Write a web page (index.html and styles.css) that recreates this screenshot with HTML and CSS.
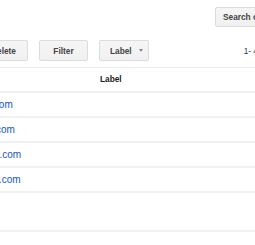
FILE: index.html
```html
<!DOCTYPE html>
<html lang="en">
<head>
  <meta charset="UTF-8" />
  <title>Filters</title>
  <link rel="stylesheet" href="styles.css">
</head>
<body>
  <div class="page">
    <div class="top-bar">
      <div class="button search-button">Search options</div>
    </div>

    <div class="toolbar">
      <div class="button">Delete</div>
      <div class="button">Filter</div>
      <div class="button label-button">Label <span class="arrow"></span></div>
      <div class="count">1- 4 of 4</div>
    </div>

    <table class="filters">
      <thead>
        <tr>
          <th class="col-match"></th>
          <th class="col-label">Label</th>
        </tr>
      </thead>
      <tbody>
        <tr><td><a href="#">info@example.com</a></td><td></td></tr>
        <tr><td><a href="#">mail@example.com</a></td><td></td></tr>
        <tr><td><a href="#">design@domain.com</a></td><td></td></tr>
        <tr><td><a href="#">info@webshop2.com</a></td><td></td></tr>
        <tr class="empty-row"><td></td><td></td></tr>
      </tbody>
    </table>
  </div>
</body>
</html>
```

FILE: styles.css
```css
* {
  margin: 0;
  padding: 0;
  box-sizing: border-box;
}

html, body {
  width: 100%;
  height: 100%;
  background-color: white;
  overflow: hidden;
  font-family: 'Liberation Sans', Arial, sans-serif;
  color: #222;
}

.page {
  width: 500px;
  margin-left: -100px;
}

.top-bar {
  display: flex;
  padding-top: 7px;
  padding-left: 315px;
}

.button {
  min-width: 49px;
  height: 21px;
  padding: 0 10px;
  display: flex;
  justify-content: center;
  align-items: center;
  background: linear-gradient(#f5f5f5, #f1f1f1);
  border: 1px solid #dcdcdc;
  border-radius: 2px;
  color: #444;
  font-size: 8.3px;
  font-weight: bold;
  white-space: nowrap;
}

.search-button {
  height: 20px;
  padding: 0 7px;
}

.toolbar {
  display: flex;
  align-items: center;
  gap: 11px;
  margin-top: 13px;
  padding-left: 79px;
}

.label-button {
  justify-content: flex-start;
  gap: 7px;
  padding: 0 5px 0 10px;
}

.arrow {
  width: 0;
  height: 0;
  border-left: 2.5px solid transparent;
  border-right: 2.5px solid transparent;
  border-top: 3px solid #888;
}

.count {
  margin-left: 84px;
  font-size: 8.3px;
  color: #333;
  white-space: nowrap;
}

.filters {
  width: 100%;
  margin-top: 6px;
  border-collapse: collapse;
}

.filters th,
.filters td {
  border-top: 1px solid #ebebeb;
  text-align: left;
  white-space: nowrap;
}

.filters th {
  height: 24px;
  font-size: 8.3px;
  font-weight: bold;
  color: #222;
}

.col-match {
  width: 200px;
}

.filters td {
  height: 25px;
  padding-left: 27px;
  padding-bottom: 2px;
  border-top-width: 2px;
  border-top-color: #f1f1f1;
}

.filters a {
  font-size: 10px;
  color: #15c;
  text-decoration: none;
}

.filters .empty-row td {
  height: 39px;
  border-bottom: 2px solid #f1f1f1;
}
```
